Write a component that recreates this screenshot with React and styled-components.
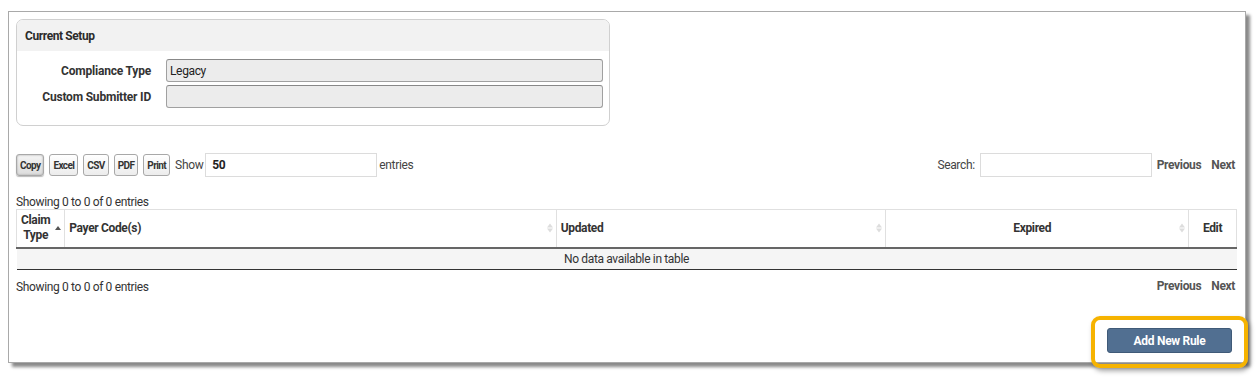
import React from 'react'
import styled, { createGlobalStyle } from 'styled-components'

const GlobalStyle = createGlobalStyle`
  body {
    margin: 0;
    min-height: 381px;
    background: #fff;
    font-family: Roboto, "Liberation Sans", sans-serif;
    color: #333;
  }
  #root {
    padding-bottom: 19px;
  }
`

const Frame = styled.div`
  position: relative;
  box-sizing: border-box;
  margin: 11px 0 0 8px;
  width: 1238px;
  height: 352px;
  border: 1px solid #a9a9a9;
  background: #fff;
  box-shadow: 4px 4px 3px #8a8a8a;
  padding: 7px 7px 0 7px;
  font-size: 12px;
  letter-spacing: -0.35px;
`

const Panel = styled.div`
  width: 594px;
  box-sizing: border-box;
  border: 1px solid #d0d0d0;
  border-radius: 7px;
  overflow: hidden;
`

const PanelHeader = styled.div`
  height: 31px;
  background: #f2f2f2;
  display: flex;
  align-items: center;
  padding-left: 8px;
  font-weight: 700;
  font-size: 12px;
  letter-spacing: -0.4px;
  color: #2b2b2b;
`

const PanelBody = styled.div`
  display: grid;
  grid-template-columns: 134px 437px;
  column-gap: 15px;
  row-gap: 3px;
  padding: 8px 0 17px 0;
  align-items: center;
`

const Label = styled.div`
  text-align: right;
  font-weight: 700;
  letter-spacing: -0.2px;
  color: #333;
`

const ReadOnly = styled.div`
  box-sizing: border-box;
  height: 23px;
  border: 1px solid #a0a0a0;
  border-top-color: #888;
  border-radius: 3px;
  background: #ececec;
  display: flex;
  align-items: center;
  padding-left: 3px;
  color: #222;
`

const Toolbar = styled.div`
  display: flex;
  align-items: center;
  justify-content: space-between;
  margin-top: 27px;
  height: 24px;
`

const Group = styled.div`
  display: flex;
  align-items: center;
  gap: ${(p) => p.gap || 6}px;
`

const ExportButton = styled.button`
  height: 22px;
  box-sizing: border-box;
  margin: 0;
  padding: 0 3px;
  border: 1px solid #a8a8a8;
  border-radius: 3px;
  background: ${(p) => (p.active ? 'linear-gradient(#f4f4f4, #dcdcdc)' : 'linear-gradient(#ffffff, #ececec)')};
  box-shadow: ${(p) => (p.active ? 'inset 0 0 2px #999, 0 1px 1px #bbb' : 'none')};
  font-family: inherit;
  font-size: 10px;
  font-weight: 700;
  letter-spacing: -0.6px;
  color: #333;
`

const TextBox = styled.div`
  box-sizing: border-box;
  width: ${(p) => p.w}px;
  height: 24px;
  border: 1px solid #dcdcdc;
  display: flex;
  align-items: center;
  padding-left: 6px;
  font-weight: 700;
  color: #222;
`

const Plain = styled.span`
  color: ${(p) => p.color || '#444'};
`

const Pager = styled.div`
  display: flex;
  gap: 10px;
  font-weight: 700;
  color: #555;
  margin-right: ${(p) => p.mr || 0}px;
`

const Info = styled.div`
  margin-top: ${(p) => p.mt}px;
  color: #333;
`

const Table = styled.table`
  width: 1221px;
  border-collapse: collapse;
  margin-top: 0;
`

const Th = styled.th`
  position: relative;
  height: 38px;
  box-sizing: border-box;
  border: 1px solid #e0e0e0;
  border-bottom: 2px solid #666;
  padding: 0 ${(p) => (p.sort ? 14 : 4)}px 0 4px;
  text-align: ${(p) => p.align || 'left'};
  font-weight: 700;
  color: #333;
  width: ${(p) => p.w}px;
  line-height: 15px;
`

const SortIcon = styled.span`
  position: absolute;
  right: 3px;
  top: 50%;
  transform: translateY(-50%);
  display: flex;
  flex-direction: column;
  gap: 1px;
`

const Tri = styled.span`
  width: 0;
  height: 0;
  border-left: 3px solid transparent;
  border-right: 3px solid transparent;
  ${(p) => (p.down ? 'border-top' : 'border-bottom')}: 4px solid ${(p) => p.color};
`

const Td = styled.td`
  height: 22px;
  box-sizing: border-box;
  background: #f5f5f5;
  border-bottom: 1px solid #333;
  text-align: center;
  color: #333;
  padding: 0;
`

const BottomRow = styled.div`
  display: flex;
  justify-content: space-between;
  align-items: center;
  margin-top: 8px;
`

const Footer = styled.div`
  display: flex;
  justify-content: flex-end;
  margin-top: 34px;
  padding-right: 6px;
`

const Highlight = styled.div`
  position: relative;
`

const Ring = styled.div`
  position: absolute;
  left: -16px;
  right: -16px;
  top: -12px;
  bottom: -15px;
  border: 4px solid #f6b300;
  border-radius: 9px;
  box-shadow: 2px 3px 5px rgba(0, 0, 0, 0.35);
  pointer-events: none;
`

const AddButton = styled.button`
  display: block;
  width: 125px;
  height: 25px;
  margin: 0;
  border: 1px solid #3f5a78;
  border-radius: 3px;
  background: #516f91;
  color: #fff;
  font-family: inherit;
  font-weight: 700;
  font-size: 12px;
  letter-spacing: -0.3px;
`

const Sort = ({ active }) => (
  <SortIcon>
    {active ? (
      <Tri color="#555" />
    ) : (
      <>
        <Tri color="#ddd" />
        <Tri down color="#ddd" />
      </>
    )}
  </SortIcon>
)

const columns = [
  { label: <>Claim<br />Type</>, w: 48, align: 'center', active: true },
  { label: 'Payer Code(s)', w: 492 },
  { label: 'Updated', w: 330 },
  { label: 'Expired', w: 303, align: 'center' },
  { label: 'Edit', w: 48, align: 'center', noSort: true },
]

export default function App() {
  return (
    <>
      <GlobalStyle />
      <Frame>
        <Panel>
          <PanelHeader>Current Setup</PanelHeader>
          <PanelBody>
            <Label>Compliance Type</Label>
            <ReadOnly>Legacy</ReadOnly>
            <Label>Custom Submitter ID</Label>
            <ReadOnly />
          </PanelBody>
        </Panel>

        <Toolbar>
          <Group gap={5}>
            <ExportButton active>Copy</ExportButton>
            <ExportButton>Excel</ExportButton>
            <ExportButton>CSV</ExportButton>
            <ExportButton>PDF</ExportButton>
            <ExportButton>Print</ExportButton>
            <Group gap={2}>
              <Plain>Show</Plain>
              <TextBox w={172}>50</TextBox>
              <Plain>entries</Plain>
            </Group>
          </Group>
          <Group gap={5}>
            <Plain>Search:</Plain>
            <TextBox w={172} />
            <Pager mr={3}>
              <span>Previous</span>
              <span>Next</span>
            </Pager>
          </Group>
        </Toolbar>

        <Info mt={18}>Showing 0 to 0 of 0 entries</Info>
        <Table>
          <thead>
            <tr>
              {columns.map((c, i) => (
                <Th key={i} w={c.w} align={c.align} sort={!c.noSort}>
                  {c.label}
                  {!c.noSort && <Sort active={c.active} />}
                </Th>
              ))}
            </tr>
          </thead>
          <tbody>
            <tr>
              <Td colSpan={5}>No data available in table</Td>
            </tr>
          </tbody>
        </Table>

        <BottomRow>
          <Info mt={2}>Showing 0 to 0 of 0 entries</Info>
          <Pager mr={3}>
            <span>Previous</span>
            <span>Next</span>
          </Pager>
        </BottomRow>

        <Footer>
          <Highlight>
            <AddButton>Add New Rule</AddButton>
            <Ring />
          </Highlight>
        </Footer>
      </Frame>
    </>
  )
}
